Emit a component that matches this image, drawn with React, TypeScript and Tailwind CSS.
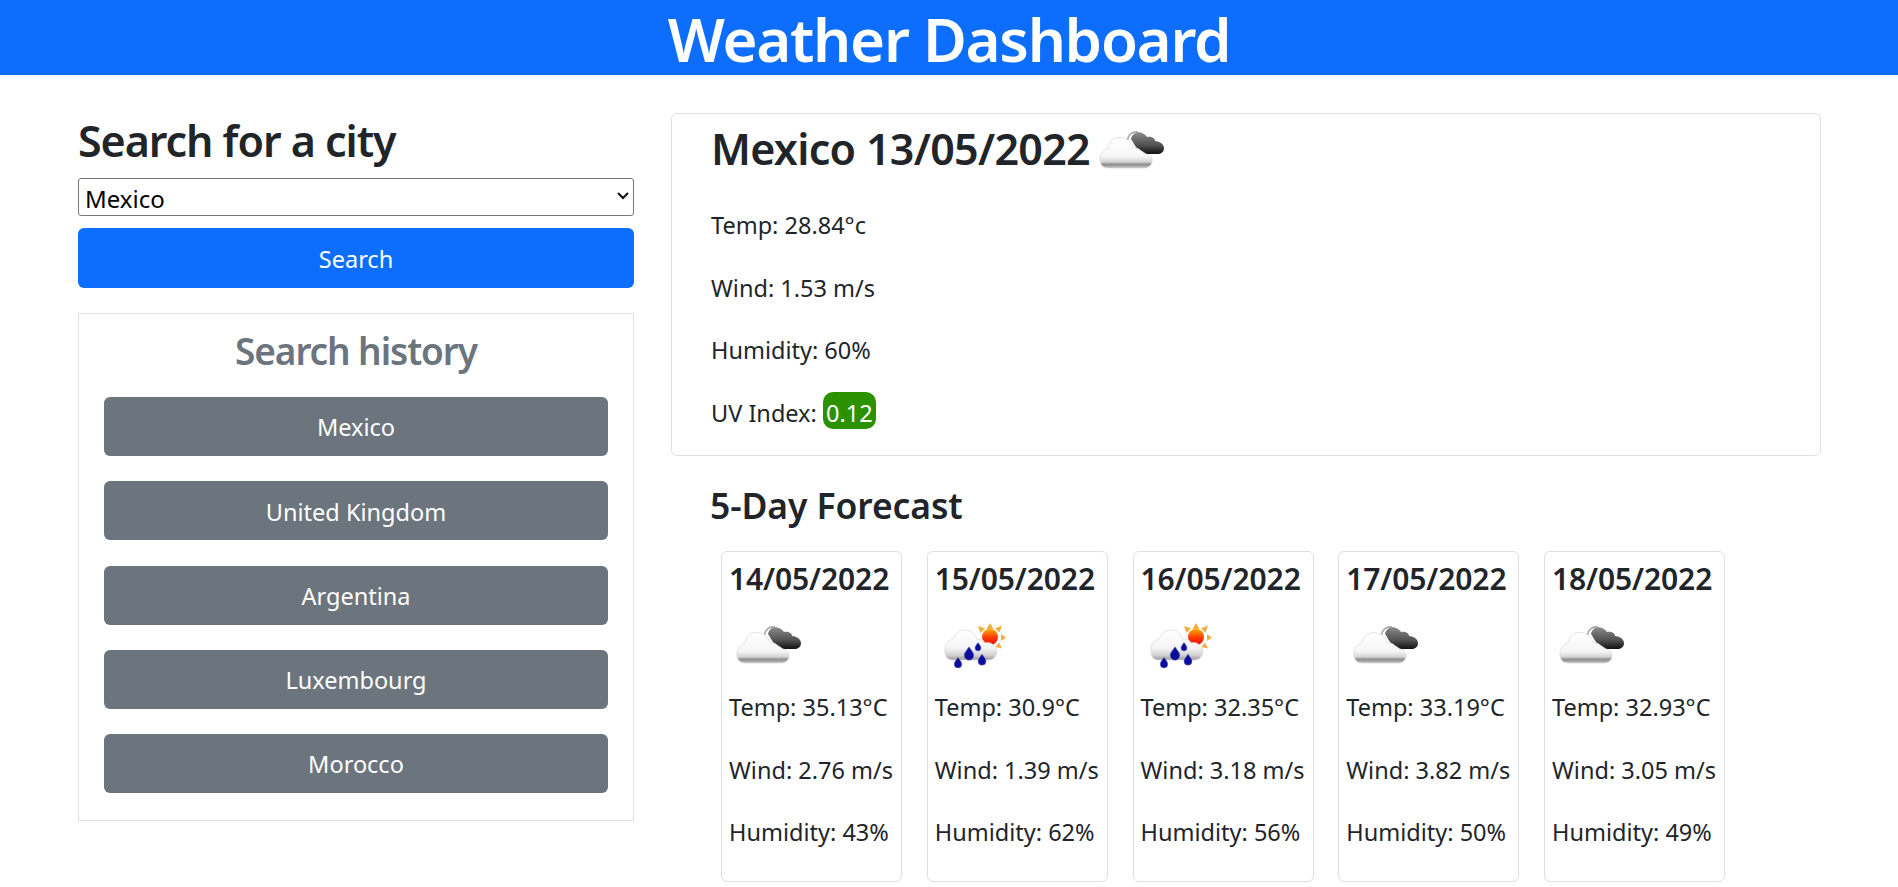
const history = ["Mexico", "United Kingdom", "Argentina", "Luxembourg", "Morocco"];

const forecast = [
  { date: "14/05/2022", icon: "cloud", temp: "35.13", wind: "2.76", humidity: "43" },
  { date: "15/05/2022", icon: "rain", temp: "30.9", wind: "1.39", humidity: "62" },
  { date: "16/05/2022", icon: "rain", temp: "32.35", wind: "3.18", humidity: "56" },
  { date: "17/05/2022", icon: "cloud", temp: "33.19", wind: "3.82", humidity: "50" },
  { date: "18/05/2022", icon: "cloud", temp: "32.93", wind: "3.05", humidity: "49" },
];

function BrokenClouds({ uid }: { uid: string }) {
  return (
    <svg width="80" height="70" viewBox="0 0 80 70" className="block">
      <defs>
        <linearGradient id={`${uid}w`} x1="0" y1="0" x2="0" y2="1">
          <stop offset="0" stopColor="#ffffff" />
          <stop offset="0.62" stopColor="#f6f6f6" />
          <stop offset="0.8" stopColor="#d4d4d4" />
          <stop offset="0.88" stopColor="#8f8f8f" />
          <stop offset="1" stopColor="#bcbcbc" />
        </linearGradient>
        <linearGradient id={`${uid}d`} x1="0" y1="0" x2="0" y2="1">
          <stop offset="0" stopColor="#8a8a8a" />
          <stop offset="0.6" stopColor="#505050" />
          <stop offset="1" stopColor="#111111" />
        </linearGradient>
        <filter id={`${uid}b`} x="-10%" y="-10%" width="120%" height="120%">
          <feGaussianBlur stdDeviation="0.7" />
        </filter>
      </defs>
      <g filter={`url(#${uid}b)`}>
        <path fill="none" stroke="#a8a8a8" strokeWidth="1.6" d="M35 27c1-6 5-10 11-9" />
        <path
          fill={`url(#${uid}d)`}
          d="M39 25c1-5 6-8 11-6 3 1 4 3 5 4 4-1 8 1 8 4 4 0 9 3 9 7 0 4-3 6-7 6H50c-3-1-5-4-6-7-2-3-3-5-5-8z"
        />
        <path
          fill={`url(#${uid}w)`}
          stroke="#dddddd"
          strokeWidth="0.8"
          d="M9 50c-3-7 0-14 7-16 1-8 8-12 15-10 5 1 9 5 10 10 2-1 5 0 7 2 2 1 4 3 6 4 5 1 7 5 6 8-1 4-4 6-8 6H17c-4 0-7-1-8-4z"
        />
      </g>
    </svg>
  );
}

function Drop({ x, y, s }: { x: number; y: number; s: number }) {
  return (
    <path
      fill="#0a0a9c"
      stroke="#6a7ac0"
      strokeWidth="0.5"
      d={`M${x} ${y - 1.5 * s}c${0.5 * s} ${0.8 * s} ${s} ${1.2 * s} ${s} ${1.8 * s}a${s} ${s} 0 1 1-${2 * s} 0c0-${0.6 * s} ${0.5 * s}-${s} ${s}-${1.8 * s}z`}
    />
  );
}

function RainSun({ uid }: { uid: string }) {
  return (
    <svg width="80" height="70" viewBox="0 0 80 70" className="block">
      <defs>
        <linearGradient id={`${uid}w`} x1="0" y1="0" x2="0" y2="1">
          <stop offset="0" stopColor="#ffffff" />
          <stop offset="0.6" stopColor="#f5f5f5" />
          <stop offset="0.85" stopColor="#cfcfcf" />
          <stop offset="1" stopColor="#9a9a9a" />
        </linearGradient>
        <linearGradient id={`${uid}s`} x1="0" y1="0" x2="0" y2="1">
          <stop offset="0" stopColor="#ffa800" />
          <stop offset="0.55" stopColor="#ff3a00" />
          <stop offset="1" stopColor="#ee0a0a" />
        </linearGradient>
        <filter id={`${uid}b`} x="-10%" y="-10%" width="120%" height="120%">
          <feGaussianBlur stdDeviation="0.55" />
        </filter>
      </defs>
      <g filter={`url(#${uid}b)`}>
        <g fill="#f8ac3a">
          <path d="M51.5 20l3.5-6 3.5 6z" />
          <path d="M45.5 24l-2.5-7 7 2.500z" />
          <path d="M60 19.500l7-3-2.500 7z" />
          <path d="M66 25l5 3.500-5 3.500z" />
          <path d="M64 33.500l3 6-6.500-1.500z" />
        </g>
        <circle cx="55" cy="28" r="8" fill={`url(#${uid}s)`} />
        <path
          fill={`url(#${uid}w)`}
          stroke="#dddddd"
          strokeWidth="0.8"
          d="M10 42c-1-6 3-11 8-12 2-6 8-10 14-9 5 1 9 5 10 10 4-1 7 0 8 3 4-1 7 0 9 3 3 2 4 6 2 9-1 3-4 5-7 5H17c-4 0-7-3-7-8z"
        />
        <Drop x={23} y={54} s={3.8} />
        <Drop x={34} y={45} s={4.8} />
        <Drop x={43} y={38} s={3} />
        <Drop x={47} y={51} s={4} />
      </g>
    </svg>
  );
}

function Stat({ children }: { children: React.ReactNode }) {
  return <p className="mb-[25px] text-[23.5px] leading-[37.5px]">{children}</p>;
}

export default function App() {
  return (
    <div className="min-h-[887px] bg-white text-[#212529] font-['Noto_Sans',sans-serif]">
      <header className="h-[75px] bg-[#0d6efd] pt-[4px] text-center">
        <h1 className="text-[60px] leading-[71px] font-semibold tracking-[-1.3px] text-white">
          Weather Dashboard
        </h1>
      </header>

      <main className="flex items-start pl-[78px] pt-[38px]">
        <aside className="w-[556px]">
          <h2 className="mt-[4px] text-[43px] leading-[48px] font-semibold tracking-[-1.05px]">
            Search for a city
          </h2>
          <div className="relative mt-[13px]">
            <select className="h-[38px] w-full appearance-none rounded-[3px] border border-[#767676] bg-white pl-[6px] pt-[2px] text-[24px] text-black">
              <option>Mexico</option>
            </select>
            <svg
              className="absolute right-[4px] top-[13px]"
              width="14"
              height="10"
              viewBox="0 0 14 10"
              fill="none"
              stroke="#111"
              strokeWidth="2"
            >
              <path d="M2 2l5 5 5-5" />
            </svg>
          </div>
          <button className="mt-[12px] block h-[60px] w-full rounded-[6px] bg-[#0d6efd] pt-[3px] text-[23.5px] text-white">
            Search
          </button>

          <section className="mt-[25px] h-[508px] border border-[#dee2e6] px-[25px] pt-[10px]">
            <h3 className="text-center text-[37px] leading-[54px] font-semibold tracking-[-1.1px] text-[#6c757d]">
              Search history
            </h3>
            <div className="mt-[19px] flex flex-col gap-[25.25px]">
              {history.map((city) => (
                <button
                  key={city}
                  className="h-[59px] w-full rounded-[6px] bg-[#6c757d] pt-[3px] text-[23.5px] text-white"
                >
                  {city}
                </button>
              ))}
            </div>
          </section>
        </aside>

        <section className="ml-[37px] w-[1150px]">
          <div className="h-[343px] rounded-[6px] border border-[#dfdfdf] pl-[39px]">
            <div className="flex h-[70px] items-center">
              <h2 className="text-[43px] leading-[60px] font-semibold tracking-[-0.7px]">
                Mexico 13/05/2022
              </h2>
              <div className="ml-[2px]">
                <BrokenClouds uid="m" />
              </div>
            </div>
            <div className="mt-[23px]">
              <Stat>Temp: 28.84°c</Stat>
              <Stat>Wind: 1.53 m/s</Stat>
              <Stat>Humidity: 60%</Stat>
              <p className="text-[23.5px] leading-[37.5px]">
                UV Index:{" "}
                <span className="-mt-[3px] inline-block rounded-[10px] bg-[#2b9100] px-[3px] pt-[6px] leading-[31px] text-white">
                  0.12
                </span>
              </p>
            </div>
          </div>

          <h3 className="mt-[25px] pl-[39px] text-[35.5px] leading-[48px] font-semibold tracking-[-0.1px]">
            5-Day Forecast
          </h3>

          <div className="mt-[22px] flex gap-[24.75px] pl-[50px]">
            {forecast.map((day, i) => (
              <div
                key={day.date}
                className="h-[331px] w-[181px] rounded-[6px] border border-[#dfdfdf] pl-[7px] pt-[9px]"
              >
                <h4 className="text-[30px] leading-[36px] font-semibold tracking-[-0.1px]">{day.date}</h4>
                <div className="mt-[12px] h-[72px]">
                  {day.icon === "cloud" ? <BrokenClouds uid={`c${i}`} /> : <RainSun uid={`r${i}`} />}
                </div>
                <div className="mt-[8px] whitespace-nowrap">
                  <Stat>Temp: {day.temp}°C</Stat>
                  <Stat>Wind: {day.wind} m/s</Stat>
                  <Stat>Humidity: {day.humidity}%</Stat>
                </div>
              </div>
            ))}
          </div>
        </section>
      </main>
    </div>
  );
}
